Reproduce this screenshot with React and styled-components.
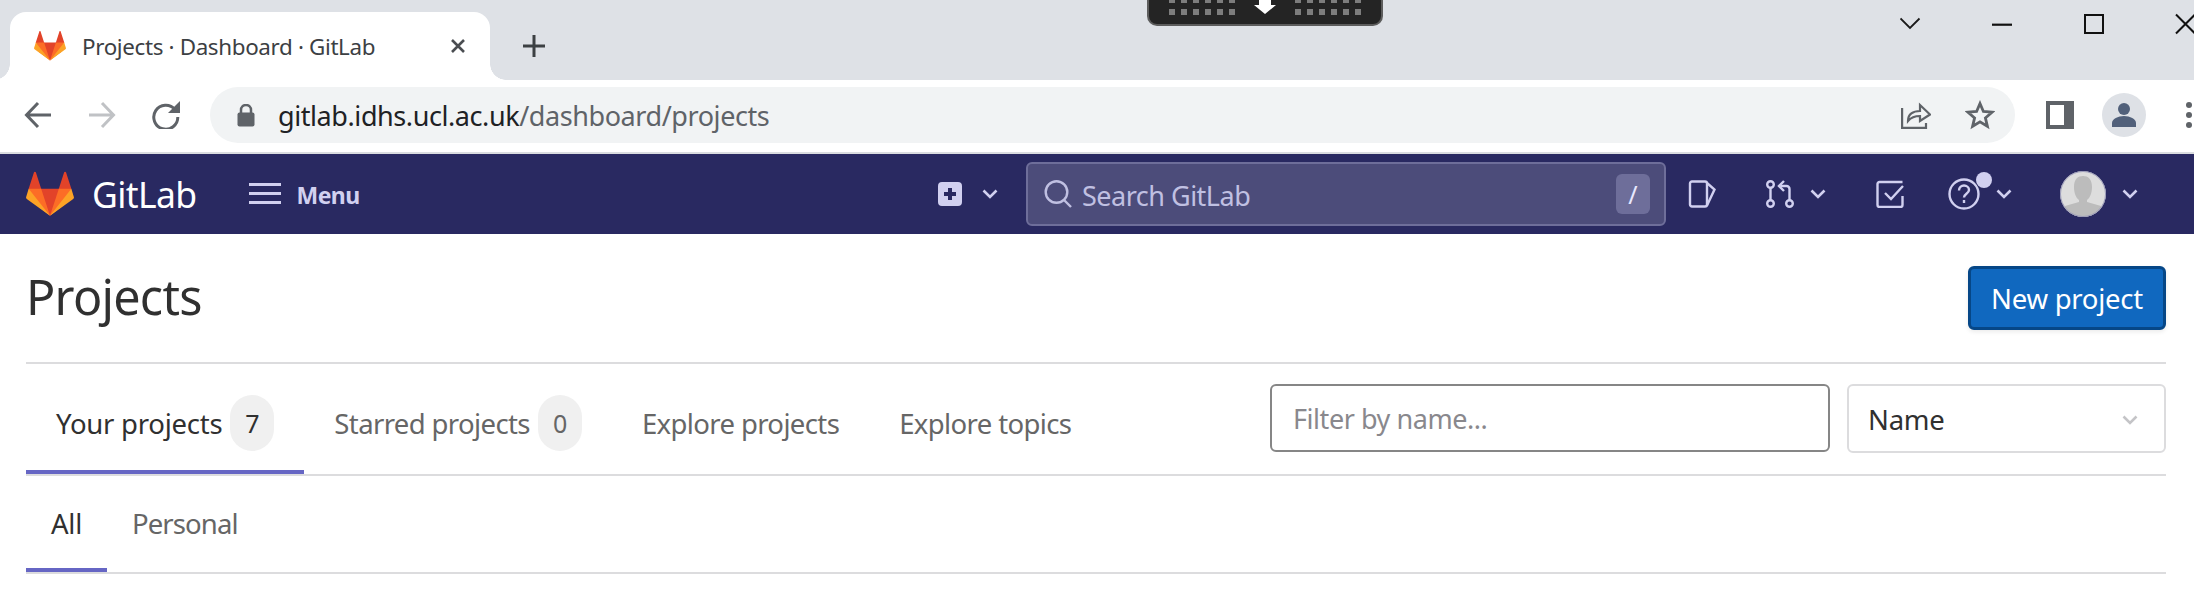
import React from "react";
import styled, { createGlobalStyle } from "styled-components";

const Global = createGlobalStyle`
  html, body { margin: 0; padding: 0; background: #fff; }
  body { font-family: "Noto Sans", "Open Sans", sans-serif; width: 2194px; overflow: hidden; }
  * { box-sizing: border-box; }
`;

const Page = styled.div`
  position: relative;
  width: 2194px;
  height: 600px;
  overflow: hidden;
  background: #fff;
`;

/* ---------- browser chrome ---------- */
const TabStrip = styled.div`
  display: flex;
  align-items: flex-end;
  height: 80px;
  padding-left: 10px;
  background: #dee1e6;
`;
const BrowserTab = styled.div`
  position: relative;
  display: flex;
  align-items: center;
  width: 480px;
  height: 68px;
  padding: 0 0 0 24px;
  background: #fff;
  border-radius: 16px 16px 0 0;
  &::before, &::after {
    content: "";
    position: absolute;
    bottom: 0;
    width: 16px;
    height: 16px;
  }
  &::before { left: -16px; background: radial-gradient(circle at 0 0, transparent 15.5px, #fff 16px); }
  &::after { right: -16px; background: radial-gradient(circle at 100% 0, transparent 15.5px, #fff 16px); }
`;
const TabTitle = styled.span`
  flex: 1;
  margin-left: 16px;
  font-size: 22.4px;
  letter-spacing: -0.35px;
  color: #3c4043;
  white-space: nowrap;
`;
const TabClose = styled.svg`
  width: 14px;
  height: 14px;
  margin-right: 25px;
`;
const NewTab = styled.svg`
  width: 24px;
  height: 24px;
  margin: 0 0 22px 32px;
`;
const WindowControls = styled.div`
  display: flex;
  align-self: flex-start;
  margin-left: auto;
  height: 48px;
  align-items: center;
`;
const DownloadBubble = styled.div`
  position: absolute;
  top: 0;
  left: 1147px;
  width: 236px;
  height: 26px;
  background: #242424;
  border: 2px solid #5c5c5c;
  border-top: none;
  border-radius: 0 0 10px 10px;
  line-height: 0;
`;
const Toolbar = styled.div`
  display: flex;
  align-items: center;
  height: 74px;
  padding: 0 2px 2px 24px;
  border-bottom: 2px solid #dadce0;
  background: #fff;
`;
const NavButtons = styled.div`
  display: flex;
  gap: 36px;
`;
const Address = styled.div`
  display: flex;
  align-items: center;
  flex: 1;
  height: 56px;
  margin: 0 31px 0 30px;
  padding: 0 20px 0 27px;
  background: #f1f3f4;
  border-radius: 28px;
`;
const Url = styled.div`
  flex: 1;
  margin-left: 23px;
  font-size: 27px;
  letter-spacing: -0.42px;
  color: #5f6368;
  white-space: nowrap;
`;
const Host = styled.span`
  color: #202124;
`;
const ToolbarRight = styled.div`
  display: flex;
  align-items: center;
`;
const BarIcon = styled.span`
  display: block;
  flex: none;
  line-height: 0;
  margin-left: ${(p) => p.$left}px;
`;

/* ---------- GitLab navbar ---------- */
const Nav = styled.nav`
  display: flex;
  align-items: center;
  height: 80px;
  padding: 0 56px 0 26px;
  background: #292961;
`;
const Wordmark = styled.span`
  margin-left: 18px;
  font-size: 35.5px;
  letter-spacing: -0.6px;
  color: #fff;
`;
const MenuLabel = styled.span`
  margin-left: 16px;
  padding-top: 2px;
  font-size: 23px;
  font-weight: 700;
  letter-spacing: -0.6px;
  color: #d1d0f0;
`;
const NavItem = styled.div`
  display: flex;
  align-items: center;
  gap: ${(p) => p.$gap ?? 16}px;
  margin-left: ${(p) => p.$left ?? 0}px;
`;
const NavSpacer = styled.div`
  flex: 1;
`;
const Search = styled.div`
  display: flex;
  align-items: center;
  width: 640px;
  height: 64px;
  margin-left: 28px;
  padding: 0 14px 0 16px;
  background: #4c4c7a;
  border: 2px solid #6e6e9a;
  border-radius: 6px;
`;
const SearchInput = styled.input`
  flex: 1;
  min-width: 0;
  margin-left: 9px;
  padding: 2px 0 0;
  border: 0;
  outline: 0;
  background: transparent;
  font-family: inherit;
  font-size: 27px;
  letter-spacing: -0.5px;
  color: #c8c8e6;
  &::placeholder { color: #c0c0e2; opacity: 1; }
`;
const Kbd = styled.kbd`
  display: flex;
  align-items: center;
  justify-content: center;
  width: 34px;
  height: 40px;
  background: #6e6e9a;
  border-radius: 6px;
  font-family: inherit;
  font-size: 25px;
  color: #e8e8ff;
`;
const HelpWrap = styled.div`
  position: relative;
  width: 32px;
  height: 32px;
  line-height: 0;
`;
const HelpDot = styled.span`
  position: absolute;
  top: -6px;
  right: -12px;
  width: 16px;
  height: 16px;
  background: #d1d0f0;
  border-radius: 50%;
`;

/* ---------- page content ---------- */
const Content = styled.main`
  padding: 0 28px 0 26px;
`;
const Header = styled.header`
  display: flex;
  align-items: center;
  justify-content: space-between;
  height: 130px;
  padding: 0;
  border-bottom: 2px solid #dcdcde;
`;
const Title = styled.h1`
  margin: -4px 0 0;
  font-size: 48.5px;
  font-weight: 400;
  letter-spacing: -0.75px;
  color: #303030;
`;
const PrimaryButton = styled.button`
  width: 198px;
  height: 64px;
  padding: 0;
  background: #1068bf;
  border: 3px solid #064787;
  border-radius: 6px;
  box-shadow: 0 2px 4px rgba(0, 0, 0, 0.08);
  font-family: inherit;
  font-size: 27.5px;
  letter-spacing: -0.25px;
  color: #fff;
`;
const TabRow = styled.div`
  display: flex;
  justify-content: space-between;
  height: 112px;
  border-bottom: 2px solid #dcdcde;
`;
const SubRow = styled(TabRow)`
  height: 98px;
`;
const Tabs = styled.div`
  display: flex;
`;
const TabLink = styled.a`
  display: flex;
  align-items: center;
  gap: 8px;
  height: 100%;
  padding: ${(p) => (p.$sub ? "2px 25px 0" : "12px 30px 0")};
  border-bottom: 4px solid ${(p) => (p.$active ? "#6666c4" : "transparent")};
  font-size: 27.5px;
  letter-spacing: ${(p) => (p.$active ? "-0.25px" : p.$sub ? "-0.9px" : "-0.62px")};
  color: ${(p) => (p.$active ? "#303030" : "#666")};
  white-space: nowrap;
`;
const Count = styled.span`
  display: flex;
  align-items: center;
  justify-content: center;
  width: 44px;
  height: 56px;
  background: #f0f0f0;
  border-radius: 22px;
  font-size: 25px;
`;
const Filters = styled.div`
  display: flex;
  align-items: flex-start;
  gap: 17px;
  padding-top: 20px;
`;
const FilterInput = styled.input`
  width: 560px;
  height: 68px;
  padding: 0 21px;
  background: #fff;
  border: 2px solid #868686;
  border-radius: 6px;
  outline: 0;
  font-family: inherit;
  font-size: 27px;
  letter-spacing: -0.45px;
  &::placeholder { color: #89888d; opacity: 1; }
`;
const SortSelect = styled.div`
  display: flex;
  align-items: center;
  justify-content: space-between;
  width: 319px;
  height: 69px;
  padding: 2px 26px 0 19px;
  border: 2px solid #dcdcde;
  border-radius: 6px;
  font-size: 27.5px;
  letter-spacing: -0.25px;
  color: #303030;
`;

/* ---------- icons ---------- */
const Icon = styled.svg`
  display: block;
  flex: none;
`;

const Tanuki = ({ size }) => (
  <Icon width={size} height={size} viewBox="0 0 36 36">
    <path fill="#e24329" d="M2 14l9.38 9v-9l-4-12.28c-.205-.632-1.176-.632-1.38 0z" />
    <path fill="#e24329" d="M34 14l-9.38 9v-9l4-12.28c.205-.632 1.176-.632 1.38 0z" />
    <path fill="#e24329" d="M18 34.38 3 14h30z" />
    <path fill="#fc6d26" d="M18 34.38 11.38 14H2l4 11z" />
    <path fill="#fc6d26" d="M18 34.38 24.62 14H34l-4 11z" />
    <path fill="#fca326" d="M2 14L.1 20.16c-.18.565 0 1.2.5 1.56l17.42 12.66z" />
    <path fill="#fca326" d="M34 14l1.9 6.16c.18.565 0 1.2-.5 1.56L18 34.38z" />
  </Icon>
);

const Chevron = ({ color = "#d1d0f0" }) => (
  <Icon width="16" height="10" viewBox="0 0 16 10" fill="none">
    <path d="M1.5 1.5 8 8l6.5-6.5" stroke={color} strokeWidth="2.6" />
  </Icon>
);

const navStroke = "#d1d0f0";

export default function App() {
  return (
    <Page>
      <Global />
      <TabStrip>
        <BrowserTab>
          <Tanuki size={32} />
          <TabTitle>Projects · Dashboard · GitLab</TabTitle>
          <TabClose viewBox="0 0 14 14">
            <path d="M1 1l12 12M13 1 1 13" stroke="#4a4d51" strokeWidth="2.6" />
          </TabClose>
        </BrowserTab>
        <NewTab viewBox="0 0 24 24">
          <path d="M12 1v22M1 12h22" stroke="#3c4043" strokeWidth="3" />
        </NewTab>
        <WindowControls>
          <Icon width="294" height="48" viewBox="0 0 294 48" fill="none">
            <path d="M0.500 18.500 10 28 19.500 18.500" stroke="#1a1a1a" strokeWidth="1.800" />
            <path d="M92 24.700h20" stroke="#111" strokeWidth="2.200" />
            <rect x="185" y="15" width="18" height="18" stroke="#111" strokeWidth="2" />
            <path d="M276 14.500 295 33.500M295 14.500 276 33.500" stroke="#111" strokeWidth="2" />
          </Icon>
        </WindowControls>
      </TabStrip>
      <DownloadBubble>
        <svg width="232" height="24" viewBox="0 0 232 24">
          {[-3, 9].map((y) =>
            [20, 32, 44, 56, 68, 80, 146, 158, 170, 182, 194, 206].map((x) => (
              <rect key={`${x}-${y}`} x={x} y={y} width="6" height="6" fill="#7d7d7d" />
            ))
          )}
          <path d="M110 0h12v5h5l-11 9-11-9h5z" fill="#fff" />
        </svg>
      </DownloadBubble>

      <Toolbar>
        <NavButtons>
          <Icon width="28" height="28" viewBox="0 0 28 28" fill="none">
            <path d="M27 14H3M14 2 2.500 14 14 26" stroke="#5f6368" strokeWidth="3" />
          </Icon>
          <Icon width="28" height="28" viewBox="0 0 28 28" fill="none">
            <path d="M1 14h24M14 2l11.500 12L14 26" stroke="#c0c2c5" strokeWidth="3" />
          </Icon>
          <Icon width="28" height="28" viewBox="0 0 28 28" fill="none">
            <path d="M23 8.500A12 12 0 1 0 25.800 16" stroke="#5f6368" strokeWidth="3" />
            <path d="M28 0v12H16z" fill="#5f6368" />
          </Icon>
        </NavButtons>
        <Address>
          <Icon width="18" height="23" viewBox="0 0 18 23">
            <path d="M4 9V6a5 5 0 0 1 10 0v3" fill="none" stroke="#5f6368" strokeWidth="2.500" />
            <rect x="0.500" y="8.500" width="17" height="14" rx="2" fill="#5f6368" />
          </Icon>
          <Url><Host>gitlab.idhs.ucl.ac.uk</Host>/dashboard/projects</Url>
          <Icon width="30" height="28" viewBox="0 0 30 28" fill="none" stroke="#5f6368" strokeWidth="2.200">
            <path d="M1.100 7v19.800H25V22" />
            <path d="M7 20c0-7 5-10 12-10V4l10 9.500L19 20v-5c-5 0-9 1.500-12 5z" />
          </Icon>
          <BarIcon $left={34}>
            <Icon width="30" height="30" viewBox="0 0 30 30" fill="none">
              <path d="M15 3.500 18.400 11.500 27 12.200 20.400 17.900 22.400 26.300 15 21.800 7.600 26.300 9.600 17.900 3 12.200 11.600 11.500z" stroke="#5f6368" strokeWidth="2.800" />
            </Icon>
          </BarIcon>
        </Address>
        <ToolbarRight>
          <Icon width="28" height="28" viewBox="0 0 28 28">
            <path fillRule="evenodd" d="M0 0h28v28H0zM4 4v20h14V4z" fill="#5f6368" />
          </Icon>
          <BarIcon $left={28}>
            <Icon width="44" height="44" viewBox="0 0 44 44">
              <circle cx="22" cy="22" r="22" fill="#dee1e6" />
              <circle cx="22" cy="16" r="6" fill="#51607a" />
              <path d="M10 34v-4c0-4 6-7 12-7s12 3 12 7v4z" fill="#51607a" />
            </Icon>
          </BarIcon>
          <BarIcon $left={40}>
            <Icon width="6" height="26" viewBox="0 0 6 26" fill="#5f6368">
              <circle cx="3" cy="3" r="3" /><circle cx="3" cy="13" r="3" /><circle cx="3" cy="23" r="3" />
            </Icon>
          </BarIcon>
        </ToolbarRight>
      </Toolbar>

      <Nav>
        <Tanuki size={48} />
        <Wordmark>GitLab</Wordmark>
        <NavItem $left={52}>
          <Icon width="32" height="22" viewBox="0 0 32 22" fill={navStroke}>
            <rect y="0" width="32" height="3" /><rect y="9" width="32" height="3" /><rect y="18" width="32" height="3" />
          </Icon>
        </NavItem>
        <MenuLabel>Menu</MenuLabel>
        <NavSpacer />
        <NavItem $gap={20}>
          <Icon width="24" height="24" viewBox="0 0 24 24">
            <path fillRule="evenodd" fill={navStroke} d="M4 0h16a4 4 0 0 1 4 4v16a4 4 0 0 1-4 4H4a4 4 0 0 1-4-4V4a4 4 0 0 1 4-4zM10 6v4H6v4h4v4h4v-4h4v-4h-4V6z" />
          </Icon>
          <Chevron />
        </NavItem>
        <Search>
          <Icon width="29" height="28" viewBox="0 0 29 28" fill="none" stroke="#c0c0e2" strokeWidth="2.400">
            <circle cx="12.500" cy="12" r="10.800" />
            <path d="M20 20l7 7" />
          </Icon>
          <SearchInput placeholder="Search GitLab" readOnly />
          <Kbd>/</Kbd>
        </Search>
        <NavItem $left={22}>
          <Icon width="28" height="28" viewBox="0 0 28 28" fill="none" stroke={navStroke} strokeWidth="2.400">
            <path d="M4 1.500h13a2 2 0 0 1 2 2v21a2 2 0 0 1-2 2H4a2 2 0 0 1-2-2v-21a2 2 0 0 1 2-2z" />
            <path d="M19 3l7.500 6.500-7.500 16" />
          </Icon>
        </NavItem>
        <NavItem $left={50}>
          <Icon width="28" height="28" viewBox="0 0 28 28" fill="none" stroke={navStroke} strokeWidth="2.400">
            <circle cx="4.500" cy="4.500" r="3.300" />
            <circle cx="4.500" cy="23.500" r="3.300" />
            <circle cx="23.500" cy="23.500" r="3.300" />
            <path d="M4.500 8v12M23.500 20V9a3 3 0 0 0-3-3h-6" />
            <path d="M18 1 13 6l5 5" />
          </Icon>
          <Chevron />
        </NavItem>
        <NavItem $left={50}>
          <Icon width="28" height="28" viewBox="0 0 28 28" fill="none" stroke={navStroke} strokeWidth="2.400">
            <path d="M26.500 2h-23a2 2 0 0 0-2 2v21a2 2 0 0 0 2 2h21a2 2 0 0 0 2-2v-9" />
            <path d="M9 13l6 6L27 6" />
          </Icon>
        </NavItem>
        <NavItem $left={44}>
          <HelpWrap>
            <Icon width="32" height="32" viewBox="0 0 32 32" fill="none" stroke={navStroke} strokeWidth="2.400">
              <circle cx="16" cy="16" r="14.500" />
              <path d="M11 12.500c0-3 2.300-5 5-5s5 2 5 4.500c0 3.800-5 3.800-5 7.500" />
              <path d="M16 22v3" />
            </Icon>
            <HelpDot />
          </HelpWrap>
          <Chevron />
        </NavItem>
        <NavItem $left={48}>
          <Icon width="46" height="46" viewBox="0 0 46 46">
            <defs>
              <clipPath id="av"><circle cx="23" cy="23" r="23" /></clipPath>
            </defs>
            <g clipPath="url(#av)">
              <rect width="46" height="46" fill="#dddddd" />
              <path d="M14 16c0-8 4-11 9-11s9 3 9 11c0 6-2 11-5 13v2l14 4v11H5V35l14-4v-2c-3-2-5-7-5-13z" fill="#bcbcbc" />
            </g>
            <circle cx="23" cy="23" r="22.500" fill="none" stroke="#9a9ab8" strokeWidth="1" />
          </Icon>
          <Chevron />
        </NavItem>
      </Nav>

      <Content>
        <Header>
          <Title>Projects</Title>
          <PrimaryButton>New project</PrimaryButton>
        </Header>
        <TabRow>
          <Tabs>
            <TabLink $active>Your projects <Count>7</Count></TabLink>
            <TabLink>Starred projects <Count>0</Count></TabLink>
            <TabLink>Explore projects</TabLink>
            <TabLink>Explore topics</TabLink>
          </Tabs>
          <Filters>
            <FilterInput placeholder="Filter by name..." readOnly />
            <SortSelect>
              Name
              <Chevron color="#c4c4c7" />
            </SortSelect>
          </Filters>
        </TabRow>
        <SubRow>
          <Tabs>
            <TabLink $sub $active>All</TabLink>
            <TabLink $sub>Personal</TabLink>
          </Tabs>
        </SubRow>
      </Content>
    </Page>
  );
}
